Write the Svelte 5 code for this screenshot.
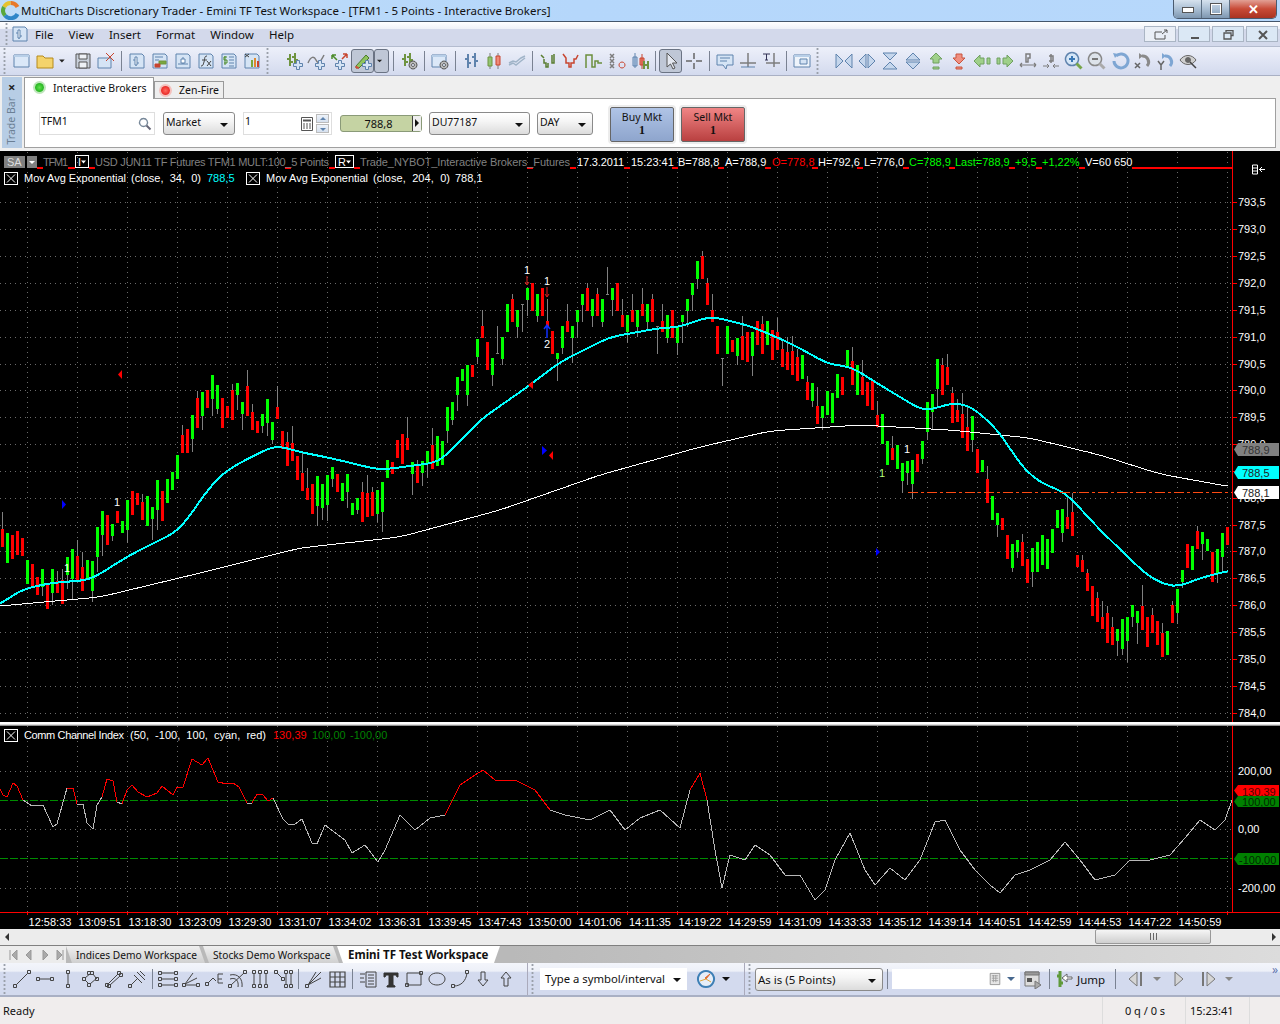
<script>
  const sq = (x, y) => `M${x - 1.5} ${y - 1.5}h3v3h-3z`;
  const B = '#5f83ad', L = '#d5e4f5', G = '#6f9440', D = '#444', GR = '#7d7d7d', R = '#c8452f';
  const doc = ['M3 3h12l2 2v12H3z', L, B];
  const plus = (x, y, c = B, f = L) => [`M${x - 1.5} ${y - 4.5}h3v3h3v3h-3v3h-3v-3h-3v-3h3z`, f, c];
  const gear = (x, y) => [`M${x} ${y - 4}a4 4 0 1 0 .01 0zM${x} ${y - 1.5}a1.5 1.5 0 1 1-.01 0z`, '#bbb', '#555'];
  const icons = {
    win: [['M2 4h15v12H2z', '#dbe8f8', B], ['M2 4h15v2H2z', '#b8cfe8', 'none']],
    folder: [['M2 5h6l2 2h8v10H2z', '#f4d36b', '#b58a1c']],
    dd: [['M3 8h8l-4 4z', '#222', 'none']],
    save: [['M3 3h14v14H3z', '#c9d0da', '#555'], ['M6 3h8v5H6zM6 11h8v6H6z', '#eef1f5', '#555']],
    delwin: [['M2 7h13v10H2z', L, B], ['M10 2l8 8M18 2l-8 8', 'none', '#c8452f']],
    docBar: [doc, ['M9 6v9M6 9h3M9 12h3', 'none', B], ['M8 6h2v8H8z', '#fff', B]],
    docGreen: [doc, ['M5 6h8M5 9h4', 'none', B], ['M9 10h7v3H9z', '#7aa83c', G], ['M5 13h5v3H5z', '#c8452f', R]],
    docScale: [doc, ['M5 13h10M10 6v7', 'none', B], ['M8 8h4v4H8z', '#fff', B]],
    docFx: [doc, ['M11 5c-3 0-2 3-3 6s-1 4-3 4M6 9h5M11 10l4 5M15 10l-4 5', 'none', '#444']],
    docDollar: [doc, ['M10 6h5M10 9h5M10 12h5M10 15h5', 'none', B], ['M8 6H5v3h3v3H5', 'none', '#4c8c2b'], ['M6 5v9', 'none', '#4c8c2b']],
    docColor: [doc, ['M9 9h2v7H9z', '#7aa83c', 'none'], ['M12 7h2v9h-2z', '#e08a2e', 'none'], ['M15 10h2v6h-2z', '#c8452f', 'none'], ['M3 3l4 3M7 3l-4 3', 'none', '#444']],
    barsPlus: [['M6 3v12M3 8h3M6 11h3M11 2v10M8 6h3M11 9h3', 'none', G, 2], plus(14, 14)],
    curvePlus: [['M1 12c3-7 6-7 8-3s4 3 8-5', 'none', GR, 1.5], plus(13, 14)],
    arrowsPlus: [['M2 4l5 5M2 4h4M2 4v4', 'none', '#4c8c2b', 1.5], ['M17 3l-5 5M17 3h-4M17 3v4', 'none', R, 1.5], plus(10, 14)],
    pencilPlus: [['M3 15L13 4l3 3L6 17H3z', '#8fc45e', '#4c7a2b'], ['M3 15l3 2H3z', '#d24c3a', '#d24c3a'], plus(14, 14)],
    barsGear: [['M6 3v12M3 8h3M6 11h3M11 2v10M8 6h3M11 9h3', 'none', G, 2], gear(14, 14)],
    winGear: [['M2 4h14v12H2z', '#dbe8f8', B], ['M2 4h14v2H2z', '#b8cfe8', 'none'], gear(14, 14)],
    ohlc: [['M7 3v14M4 8h3M7 12h3M14 2v14M11 6h3M14 10h3', 'none', '#5f83ad', 2]],
    candle: [['M6 2v16M14 2v16', 'none', GR], ['M4 6h4v9H4z', '#93c572', G], ['M12 5h4v9h-4z', '#ef8a78', R]],
    lineIcon: [['M2 14l4-2 3 2 5-4 4-3M2 12l4-2 3 1 5-4 4-2', 'none', '#a0b4c8', 1.5]],
    kagi: [['M3 4l3 3M6 8v4h2v4h2v-4M14 4v8h2V3', 'none', '#5a7d30', 1.5]],
    vshape: [['M2 3l3 4v5h3v4h2v-4h3V8h2l2-4', 'none', R, 1.5]],
    step: [['M2 17V4h6v12h3v-6h3v2h4', 'none', '#6b8e3d', 1.5]],
    pf: [['M3 3l4 4M7 3l-4 4M3 8l4 4M7 8l-4 4M3 13l4 4M7 13l-4 4', 'none', GR, 1.5], ['M15 11a3 3 0 1 0 .01 0z', 'none', R]],
    renko: [['M5 2v15M3 6h4v9H3z', '#bcd0ea', B], ['M12 3v15M10 7h4v7h-4z', '#ef8a78', R], ['M14 10v8M18 10v8M14 14h4', 'none', G, 2]],
    arrow: [['M6 2v14l3.5-3 2.5 5 2-1-2.5-5H16z', '#e4e8f0', '#555']],
    cross: [['M10 2v6M10 12v6M2 10h6M12 10h6', 'none', '#666', 1.5]],
    note: [['M2 4h16v10h-6l-1 4-3-4H2z', L, B], ['M5 7h10M5 10h7', 'none', B]],
    tradeLine: [['M10 2v14M2 12h16', 'none', GR, 1.5], ['M3 16h14', 'none', B]],
    tradeText: [['M13 2v14M5 12h14', 'none', GR, 1.5], ['M2 3h7M5.5 3v6M4 9h3', 'none', '#335']],
    panel: [['M2 4h16v12H2z', '#eef4fb', B], ['M8 8h7v5H8z', L, B], ['M2 4h16v2H2z', '#b8cfe8', 'none']],
    shrinkH: [['M2 3v14l7-7zM18 3v14l-7-7z', '#c5d6ec', B]],
    expandH: [['M9 3v14L2 10zM11 3v14l7-7z', '#c5d6ec', B]],
    shrinkV: [['M3 2h14l-7 7zM3 18h14l-7-7z', '#c5d6ec', B]],
    expandV: [['M3 9h14l-7-7zM3 11h14l-7 7z', '#c5d6ec', B]],
    upG: [['M10 2l6 6h-3v4H7V8H4z', '#9fd08a', '#6fa060'], ['M7 16h6v2H7z', '#9fd08a', '#6fa060']],
    downR: [['M10 13l6-6h-3V3H7v4H4z', '#f08f80', '#c8553f'], ['M7 16h6v2H7z', '#f08f80', '#c8553f']],
    leftG: [['M2 10l6-6v3h4v6H8v3z', '#9fd08a', '#6fa060'], ['M15 7h3v6h-3z', '#9fd08a', '#6fa060']],
    rightG: [['M18 10l-6-6v3H8v6h4v3z', '#9fd08a', '#6fa060'], ['M2 7h3v6H2z', '#9fd08a', '#6fa060']],
    zoomBar: [['M8 3h4v4h-2v4h-2z', 'none', GR, 1.5], ['M2 14h16M2 14l2-2M2 14l2 2M18 14l-2-2M18 14l-2 2', 'none', GR, 1.2]],
    zoomBar2: [['M10 3v9M8 5h4v5H8', 'none', GR, 1.5], ['M2 15h6M8 15l-2-2M8 15l-2 2M18 15h-6M12 15l2-2M12 15l2 2', 'none', GR]],
    zoomIn: [['M8 1.5a6.5 6.5 0 1 0 .01 0z', '#d5e6f7', B, 1.5], ['M8 5v6M5 8h6', 'none', '#3a78b5', 2], ['M12.5 12.5l5 5', 'none', '#77a64a', 3]],
    zoomOut: [['M8 1.5a6.5 6.5 0 1 0 .01 0z', '#dde3ea', '#888', 1.5], ['M5 8h6', 'none', '#777', 2], ['M12.5 12.5l5 5', 'none', '#aaa', 3]],
    undoB: [['M6 5a7 7 0 1 1-2 5', 'none', '#7ea6d3', 3], ['M3 2l5 1-3 4z', '#7ea6d3', 'none']],
    undoX: [['M9 5a6 6 0 0 1 5 10', 'none', '#8a8a8a', 3], ['M6 2l4 3-4 3z', '#8a8a8a', 'none'], ['M2 12l5 5M7 12l-5 5', 'none', '#666', 1.5]],
    undoY: [['M9 5a6 6 0 0 1 5 10', 'none', '#7ea6d3', 3], ['M6 2l4 3-4 3z', '#7ea6d3', 'none'], ['M2 10l3 4 3-4M5 14v5', 'none', '#666', 1.5]],
    eye: [['M1 9c4-6 12-6 16 0-4 6-12 6-16 0z', '#cfcfcf', '#666'], ['M9 6a3 3 0 1 0 .01 0z', '#666', 'none'], ['M11 11l6 6', 'none', '#444', 1.5]],
    tLine: [[sq(3, 17) + sq(17, 3) + 'M4.5 15.5L15.5 4.5', 'none', D]],
    hLine: [[sq(3, 10) + sq(17, 10) + 'M4.5 10h11', 'none', D]],
    vLine: [[sq(10, 3) + sq(10, 17) + 'M10 4.5v11', 'none', D]],
    chan3: [[sq(3, 10) + sq(8, 16) + sq(11, 4) + sq(16, 10) + sq(8, 4) + 'M4 9l6-5M4 11l4 4M9 15l7-6M12 5l3 4', 'none', D]],
    chan2: [[sq(3, 16) + sq(15, 4) + sq(5, 17) + sq(17, 6) + 'M4 15L14 5M6 16L16 7', 'none', D]],
    fork: [[sq(3, 17) + 'M4 16l6-6M7 6l8 8M10 3l8 8M13 2l5 5', 'none', D]],
    fibH: [[sq(2, 4) + sq(18, 4) + sq(2, 10) + sq(18, 10) + sq(2, 16) + sq(18, 16) + 'M4 4h12M4 10h12M4 16h12', 'none', D]],
    fibFan: [[sq(3, 16) + sq(17, 16) + 'M4 16h12M4 15l12-6M4 15l8-11', 'none', D]],
    fibExt: [[sq(3, 15) + 'M4 14l5-5 3 3M14 5h5M14 5v9h5M14 10h4', 'none', D]],
    fibArc: [[sq(3, 17) + sq(18, 3) + 'M4 16L17 4M3 10c6-2 9 2 8 8M3 6c8-2 13 4 12 12', 'none', D]],
    timeZ: [[sq(4, 3) + sq(4, 17) + sq(10, 3) + sq(10, 17) + sq(16, 3) + sq(16, 17) + 'M4 4.5v11M10 4.5v11M16 4.5v11', 'none', D]],
    timeC: [[sq(3, 3) + sq(10, 10) + sq(13, 3) + sq(13, 17) + sq(18, 3) + sq(18, 17) + 'M4 4l5 5M13 4.5v11M18 4.5v11', 'none', D]],
    gann: [[sq(3, 17) + 'M4 16L17 3M4 16L12 3M4 16L17 9', 'none', D]],
    grid: [['M3 3h15v15H3zM3 8h15M3 13h15M8 3v15M13 3v15', 'none', D, 1.2]],
    calc: [['M2 5h5M2 9h4M2 13h5', 'none', D], ['M8 3h10v15H8z', 'none', D], ['M10 6h6M10 9h6M10 12h6M10 15h6', 'none', D]],
    txt: [['M3 4h14v4h-1l-1-2h-3v10l2 1v1H6v-1l2-1V6H5L4 8H3z', '#333', '#333']],
    rectT: [[sq(3, 16) + sq(17, 4) + 'M3 4h14v12H3z', 'none', D]],
    ell: [['M10 4c5 0 8 3 8 6s-3 6-8 6-8-3-8-6 3-6 8-6z', 'none', D]],
    arcT: [[sq(3, 17) + sq(17, 3) + 'M4 17c7 0 12-5 13-13', 'none', D]],
    downA: [['M8 3h4v8h3l-5 6-5-6h3z', 'none', D]],
    upA: [['M8 17h4V9h3l-5-6-5 6h3z', 'none', D]],
    globe: [['M10 2a8 8 0 1 0 .01 0z', '#e6eef8', '#3d7fb5', 2], ['M10 10l4-5-5 4z', '#e06a2e', '#e06a2e'], ['M4 12l6-2 5 3', 'none', '#e0a53c']],
    calBtn: [['M4 3h12v14H4z', '#e6e6e6', '#888'], ['M6 6h8M6 9h8M6 12h8M8 5v9M11 5v9', 'none', '#999']],
    cal2: [['M2 3h14v14H2z', '#ddd', '#777'], ['M2 3h14v3H2z', '#999', '#777'], ['M4 9h5v4H4z', '#555', 'none'], ['M12 12l6 4-6 4z', '#aaa', '#777']],
    jump: [['M6 2v16M3 7h3M6 14h3', 'none', '#5f9a3a', 3], ['M18 8h-5V5l-5 4 5 4v-3h5z', '#fff', '#666']],
    prevBar: [['M11 3v14l-8-7z', '#d5d5d5', '#777'], ['M15 3v14', 'none', '#777', 2]],
    play: [['M6 3v14l8-7z', '#d5d5d5', '#777']],
    nextBar: [['M5 3v14', 'none', '#777', 2], ['M9 3v14l8-7z', '#d5d5d5', '#777']]
  };
  const topRow = ['win', 'folder', '~dd', 'save', 'delwin', '|', 'docBar', 'docGreen', 'docScale', 'docFx', 'docDollar', 'docColor', '>', 'barsPlus', 'curvePlus', 'arrowsPlus', '*pencilPlus', '*~dd', '|', 'barsGear', '|', 'winGear', '|', 'ohlc', 'candle', 'lineIcon', '|', 'kagi', 'vshape', 'step', 'pf', 'renko', '|', '*arrow', 'cross', '|', 'note', 'tradeLine', 'tradeText', '|', 'panel', '>', 'shrinkH', 'expandH', 'shrinkV', 'expandV', 'upG', 'downR', 'leftG', 'rightG', 'zoomBar', 'zoomBar2', 'zoomIn', 'zoomOut', 'undoB', 'undoX', 'undoY', 'eye'];
  const bottomRow = ['tLine', 'hLine', 'vLine', 'chan3', 'chan2', 'fork', '|', 'fibH', 'fibFan', 'fibExt', 'fibArc', 'timeZ', 'timeC', '|', 'gann', 'grid', '|', 'calc', 'txt', 'rectT', 'ell', 'arcT', 'downA', 'upA'];

  const interp = (pts, x) => {
    for (let i = 1; i < pts.length; i++) {
      if (x <= pts[i][0]) {
        const [a, b] = pts[i - 1], [c, d] = pts[i];
        return b + ((x - a) / (c - a)) * (d - b);
      }
    }
    return pts[pts.length - 1][1];
  };
  const pricePath = [[0, 550], [15, 545], [30, 570], [50, 590], [60, 595], [70, 560], [90, 575], [105, 520], [120, 530], [135, 510], [150, 510], [170, 490], [190, 420], [210, 395], [225, 410], [240, 395], [255, 420], [275, 420], [295, 460], [315, 500], [335, 470], [350, 500], [380, 500], [400, 440], [420, 470], [440, 450], [455, 400], [470, 365], [480, 350], [725, 340], [745, 340], [770, 340], [800, 370], [820, 420], [840, 390], [850, 360], [870, 400], [890, 450], [910, 475], [925, 430], [940, 365], [955, 410], [975, 440], [985, 490], [1005, 540], [1030, 570], [1050, 540], [1065, 510], [1085, 580], [1100, 630], [1115, 640], [1130, 620], [1150, 630], [1165, 640], [1180, 590], [1195, 540], [1215, 560], [1230, 530]];
  const traced = [[482, 258, 293, 0, 210, 295], [487, 306, 390, 0, 306, 390], [492, 354, 405, 1, 354, 438], [497, 340, 341, -1, 258, 340], [502, 291, 357, 1, 291, 375], [507, 192, 276, 1, 192, 276], [512, 177, 246, 0, 162, 246], [517, 210, 262, 1, 210, 293], [522, 193, 194, -1, 193, 276], [527, 144, 180, 1, 144, 228], [532, 129, 213, 0, 129, 213], [537, 162, 228, 1, 162, 246], [542, 144, 228, 0, 144, 228], [547, 243, 261, 0, 177, 261], [552, 273, 342, 0, 273, 342], [557, 339, 357, 1, 339, 422], [562, 258, 324, 1, 258, 342], [567, 243, 276, 0, 192, 276], [572, 258, 294, 1, 258, 370], [577, 210, 246, 1, 210, 295], [582, 162, 195, 1, 162, 246], [587, 144, 213, 0, 129, 213], [592, 177, 228, 1, 177, 260], [597, 162, 228, 0, 144, 228], [602, 177, 246, 1, 177, 262], [607, 162, 163, -1, 81, 162], [612, 144, 180, 1, 144, 228], [617, 129, 213, 0, 129, 213], [622, 225, 261, 0, 177, 261], [627, 225, 276, 1, 225, 310], [632, 210, 246, 0, 162, 246], [637, 210, 262, 1, 210, 290], [642, 192, 228, 0, 144, 228], [647, 192, 246, 1, 192, 270], [652, 177, 246, 0, 162, 246], [657, 258, 259, -1, 258, 342], [662, 243, 276, 0, 192, 276], [667, 225, 294, 1, 225, 310], [672, 210, 294, 0, 210, 294], [677, 258, 310, 1, 258, 345], [682, 225, 246, 1, 225, 310], [687, 177, 213, 1, 177, 260], [692, 129, 165, 1, 129, 213], [697, 63, 117, 1, 63, 147], [702, 48, 117, 0, 33, 117], [707, 129, 195, 0, 113, 195], [712, 210, 246, 0, 162, 246], [717, 258, 342, 0, 258, 342], [722, 354, 355, -1, 354, 438], [727, 258, 342, 1, 258, 342]];
  let seed = 7;
  const rnd = () => ((seed = (seed * 16807) % 2147483647) / 2147483647);
  const candles = [];
  for (let i = 0; i < 246; i++) {
    const x = 2 + 5 * i;
    const t = traced.find((c) => c[0] === x);
    if (t) {
      candles.push({ x, top: 240 + t[1] / 3, bot: 240 + t[2] / 3, kind: t[3], wt: 240 + t[4] / 3, wb: 240 + t[5] / 3 });
      continue;
    }
    const c = interp(pricePath, x) + (rnd() - 0.5) * 22;
    const slope = interp(pricePath, x + 5) - interp(pricePath, x - 5);
    const up = rnd() < (slope < 0 ? 0.72 : slope > 0 ? 0.35 : 0.5);
    const h = 12 + Math.floor(rnd() * 4) * 6;
    const top = Math.round(c - h / 2), bot = top + h;
    const w = rnd() < 0.65 ? 4 + rnd() * 18 : 0;
    candles.push({ x, top, bot, kind: up ? 1 : 0, wt: up ? top : top - w, wb: up ? bot + w : bot });
  }
  const pts = (a) => a.map((p) => p.join(',')).join(' ');
  const smooth = (p) => {
    const o = [];
    for (let x = p[0][0]; x <= p[p.length - 1][0]; x += 5) {
      const avg = (interp(p, x - 10) + interp(p, x) * 2 + interp(p, x + 10)) / 4;
      o.push([x, +avg.toFixed(1)]);
    }
    return o;
  };
  const ema34 = smooth([[-12, 607], [0, 605], [20, 590], [50, 583], [90, 580], [130, 555], [150, 545], [180, 530], [195, 508], [215, 480], [235, 465], [250, 458], [275, 445], [300, 452], [330, 458], [380, 470], [440, 462], [480, 420], [530, 385], [560, 362], [610, 337], [660, 328], [680, 327], [710, 316], [750, 326], [790, 343], [830, 365], [850, 366], [880, 385], [925, 412], [950, 403], [970, 405], [1000, 432], [1020, 465], [1040, 483], [1065, 492], [1100, 530], [1150, 578], [1175, 588], [1200, 578], [1232, 570]]);
  const ema204 = smooth([[-12, 607], [0, 606], [100, 597], [200, 573], [300, 548], [400, 537], [500, 510], [600, 475], [700, 447], [770, 431], [860, 425], [950, 430], [1030, 438], [1100, 455], [1160, 474], [1232, 487]]);
  const cci = [[0, 789], [3, 795], [7, 797], [13, 783], [17, 786], [23, 800], [32, 806], [43, 805], [53, 827], [57, 824], [67, 788], [73, 788], [77, 804], [83, 804], [87, 823], [93, 829], [97, 805], [102, 797], [107, 779], [113, 781], [117, 802], [122, 804], [127, 790], [132, 785], [138, 792], [147, 797], [157, 793], [162, 786], [173, 795], [177, 787], [183, 787], [192, 759], [202, 765], [208, 758], [218, 782], [227, 784], [233, 783], [239, 787], [247, 803], [252, 803], [257, 794], [263, 795], [268, 801], [273, 798], [283, 819], [288, 824], [295, 824], [302, 819], [312, 843], [317, 844], [325, 825], [345, 840], [352, 853], [365, 845], [378, 862], [385, 850], [400, 815], [415, 830], [430, 818], [445, 815], [460, 785], [475, 775], [483, 770], [495, 780], [515, 780], [535, 790], [550, 810], [565, 815], [590, 820], [610, 810], [625, 830], [640, 818], [660, 810], [680, 828], [690, 790], [700, 773], [707, 800], [715, 850], [722, 888], [730, 855], [745, 860], [755, 845], [770, 855], [785, 875], [800, 875], [815, 900], [825, 890], [835, 860], [850, 833], [865, 870], [875, 885], [890, 868], [905, 880], [920, 860], [935, 822], [945, 820], [960, 850], [975, 870], [990, 885], [1000, 893], [1015, 875], [1030, 870], [1050, 860], [1065, 842], [1080, 860], [1095, 880], [1115, 875], [1130, 860], [1150, 860], [1170, 855], [1185, 838], [1200, 820], [1215, 830], [1225, 820], [1232, 800]];
  const cciSegs = cci.slice(1).map((p, i) => {
    const a = cci[i];
    return { x1: a[0], y1: a[1], x2: p[0], y2: p[1], c: (a[1] + p[1]) / 2 < 801 ? '#ff0000' : '#b8b8b8' };
  });
  const vGrid = Array.from({ length: 25 }, (_, i) => 27 + 50 * i);
  const priceLabels = [];
  const priceVals = ['793,5', '793,0', '792,5', '792,0', '791,5', '791,0', '790,5', '790,0', '789,5', '789,0', '', '788,0', '787,5', '787,0', '786,5', '786,0', '785,5', '785,0', '784,5', '784,0'];
  const priceYs = [202, 229, 256, 283, 310, 337, 364, 390, 417, 444, 471, 498, 525, 551, 578, 605, 632, 659, 686, 713];
  priceVals.forEach((t, i) => priceLabels.push({ t, y: priceYs[i] }));
  const times = ['12:58:33', '13:09:51', '13:18:30', '13:23:09', '13:29:30', '13:31:07', '13:34:02', '13:36:31', '13:39:45', '13:47:43', '13:50:00', '14:01:06', '14:11:35', '14:19:22', '14:29:59', '14:31:09', '14:33:33', '14:35:12', '14:39:14', '14:40:51', '14:42:59', '14:44:53', '14:47:22', '14:50:59'];
  const under = [[37, 43], [68, 75], [89, 95], [285, 291], [329, 335], [354, 360], [527, 533], [570, 576], [624, 630], [672, 678], [718, 724], [765, 771], [812, 818], [857, 863], [903, 909], [949, 955], [1009, 1015], [1036, 1042], [1079, 1085], [1132, 1232]];
  const marks = [
    { x: 527, y: 274, t: '1', c: '#fff' }, { x: 547, y: 285, t: '1', c: '#fff' }, { x: 547, y: 348, t: '2', c: '#fff' },
    { x: 117, y: 506, t: '1', c: '#fff' }, { x: 67, y: 572, t: '1', c: '#fff' }, { x: 907, y: 453, t: '1', c: '#fff' }, { x: 882, y: 477, t: '1', c: '#b6ff7a' }
  ];
  const tris = ['122,370 118,374.5 122,379', '62,500 66,504.5 62,509', '542,446 547,450.5 542,455', '553,451 549,455.5 553,460', '876,548 880,552 876,556', '533,381 528,385 533,389'];
  const triCol = ['#f00', '#00f', '#00f', '#f00', '#00f', '#f00'];
</script>

{#snippet ic(name, size = 20)}
  <svg class="ic" width={size} height={size} viewBox="0 0 20 20" aria-hidden="true">
    {#each icons[name] as p}
      <path d={p[0]} fill={p[1]} stroke={p[2]} stroke-width={p[3] ?? 1} />
    {/each}
  </svg>
{/snippet}

{#snippet cell(item)}
  {#if item === '|'}
    <span class="sep"></span>
  {:else if item === '>'}
    <span class="grip"></span>
  {:else}
    {@const active = item.startsWith('*')}
    {@const clean = item.replace('*', '')}
    {#if clean.startsWith('~')}
      <span class="cell narrow" class:active>{@render ic('dd', 14)}</span>
    {:else}
      <span class="cell" class:active>{@render ic(clean)}</span>
    {/if}
  {/if}
{/snippet}

<div class="app">
  <header class="title">
    <svg class="logo" width="19" height="19" viewBox="0 0 19 19" aria-hidden="true">
      <g fill="none" stroke-width="4">
        <path d="M16.500 6A7.500 7.500 0 0 0 9.500 2" stroke="#e8792b" />
        <path d="M9.500 2A7.500 7.500 0 0 0 3 6" stroke="#e7c22e" />
        <path d="M3 6A7.500 7.500 0 0 0 4 14.500" stroke="#5aa83c" />
        <path d="M4 14.500A7.500 7.500 0 0 0 16.500 13" stroke="#2f86c8" />
      </g>
    </svg>
    <span class="title-text">MultiCharts Discretionary Trader - Emini TF Test Workspace - [TFM1 - 5 Points - Interactive Brokers]</span>
    <div class="winbtns">
      <span class="wb"><i class="wmin"></i></span>
      <span class="wb"><i class="wmax"></i></span>
      <span class="wb close">✕</span>
    </div>
  </header>

  <nav class="menubar">
    <span class="grip small"></span>
    <span class="mico">{@render ic('docBar')}</span>
    {#each ['File', 'View', 'Insert', 'Format', 'Window', 'Help'] as m}
      <span class="menu">{m}</span>
    {/each}
    <div class="mdi">
      <span class="mb first"><svg width="14" height="11" viewBox="0 0 14 11"><path d="M1 3h7M1 3v7h10V6M8 5l5-4M10 1h3v3" fill="none" stroke="#555" /></svg></span>
      <span class="mb"><i class="d-min"></i></span>
      <span class="mb"><svg width="11" height="10" viewBox="0 0 11 10"><path d="M3 2V0.500h7v5H8M1 3h7v6H1z" fill="none" stroke="#555" stroke-width="1.300" /></svg></span>
      <span class="mb"><svg width="10" height="10" viewBox="0 0 10 10"><path d="M1 1l8 8M9 1l-8 8" stroke="#555" stroke-width="2" /></svg></span>
    </div>
  </nav>

  <div class="toolbar">
    <span class="grip"></span>
    {#each topRow as it}{@render cell(it)}{/each}
  </div>

  <section class="trade">
    <aside class="rail"><span class="rail-x">×</span><span class="rail-t">Trade Bar</span></aside>
    <div class="trade-main">
      <div class="ttabs">
        <span class="ttab on"><i class="led green"></i>Interactive Brokers</span>
        <span class="ttab"><i class="led red"></i>Zen-Fire</span>
      </div>
      <div class="tpanel">
        <div class="field w-sym"><span>TFM1</span>
          <svg width="14" height="14" viewBox="0 0 14 14"><path d="M5.500 1.500a4 4 0 1 0 .01 0z" fill="none" stroke="#789" stroke-width="1.300" /><path d="M8.500 8.500l4 4" stroke="#667" stroke-width="2" /></svg>
        </div>
        <div class="sel w-mkt">Market<i class="caret"></i></div>
        <div class="field w-qty"><span>1</span>
          <svg class="calc" width="14" height="14" viewBox="0 0 14 14"><path d="M1.500.500h11v13h-11z" fill="#fff" stroke="#555" /><path d="M3 2.500h8v2H3z" fill="#555" /><path d="M3 7h2M6 7h2M9 7h2M3 9h2M6 9h2M9 9h2M3 11h2M6 11h2M9 11h2" stroke="#555" /></svg>
          <span class="spin"><i class="up"></i><i class="down"></i></span>
        </div>
        <div class="price"><span>788,8</span><em><i></i></em></div>
        <div class="sel w-acc">DU77187<i class="caret"></i></div>
        <div class="sel w-day">DAY<i class="caret"></i></div>
        <button class="ord buy">Buy Mkt<b>1</b></button>
        <button class="ord sell">Sell Mkt<b>1</b></button>
      </div>
    </div>
  </section>

  <svg class="pane main" width="1280" height="571" viewBox="0 151 1280 571">
    <rect x="0" y="151" width="1280" height="571" fill="#000" />
    <g stroke="#6a6a6a" stroke-dasharray="1 4" shape-rendering="crispEdges">
      {#each vGrid as x}<line x1={x + 0.5} x2={x + 0.5} y1="152" y2="722" />{/each}
      {#each priceYs as y}<line x1="0" x2="1232" y1={y + 0.5} y2={y + 0.5} />{/each}
    </g>
    <g shape-rendering="crispEdges">
      {#each candles as c}
        <line x1={c.x + 0.5} x2={c.x + 0.5} y1={c.wt} y2={c.wb} stroke="#808080" />
        {#if c.kind === -1}
          <line x1={c.x - 1} x2={c.x + 2} y1={c.top + 0.5} y2={c.top + 0.5} stroke="#808080" />
        {:else}
          <rect x={c.x - 1} y={c.top} width="3" height={c.bot - c.top} fill={c.kind ? '#00ff00' : '#ff0000'} />
        {/if}
      {/each}
    </g>
    <polyline points={pts(ema204)} fill="none" stroke="#fff" stroke-width="1" shape-rendering="crispEdges" />
    <polyline points={pts(ema34)} fill="none" stroke="#00ffff" stroke-width="2" shape-rendering="crispEdges" />
    <line x1="908" x2="1232" y1="492.500" y2="492.500" stroke="#ff4a12" stroke-width="1.500" stroke-dasharray="10 3 3 3" shape-rendering="crispEdges" />
    {#each tris as t, i}<polygon points={t} fill={triCol[i]} />{/each}
    {#each marks as m}<text class="mk" x={m.x} y={m.y} fill={m.c}>{m.t}</text>{/each}
    <path d="M527 276v8M525 282l2 3 2-3M547 287v9M545 294l2 3 2-3" stroke="#e02020" fill="none" />
    <path d="M547 338v-12M544 329l3-4 3 4" stroke="#1030ff" fill="none" stroke-width="1.500" />

    <g shape-rendering="crispEdges" fill="#ff0000">
      {#each under as u}<rect x={u[0]} y="167" width={u[1] - u[0]} height="2" />{/each}
    </g>
    <rect x="4" y="156" width="21" height="12" fill="#808080" />
    <text class="lg" x="7" y="166" fill="#ddd">SA</text>
    <rect x="27" y="156" width="10" height="12" fill="#808080" />
    <path d="M29 161h6l-3 3z" fill="#fff" />
    <text class="lg" x="43" y="166" fill="#808080" textLength="25">TFM1</text>
    <rect x="75.500" y="155.500" width="13" height="12" fill="none" stroke="#fff" />
    <text class="lg" x="78" y="166" fill="#fff">I</text><path d="M81 160.500h5l-2.500 3z" fill="#fff" />
    <text class="lg" x="95" y="166" fill="#808080" textLength="234">USD JUN11 TF Futures TFM1 MULT:100_5 Points</text>
    <rect x="335.500" y="155.500" width="18" height="12" fill="none" stroke="#fff" />
    <text class="lg" x="338" y="166" fill="#fff">R</text><path d="M346 160.500h5l-2.500 3z" fill="#fff" />
    <text class="lg" x="360" y="166" fill="#808080" textLength="210">Trade_NYBOT_Interactive Brokers_Futures</text>
    <text class="lg" x="577" y="166" fill="#fff" textLength="47">17.3.2011</text>
    <text class="lg" x="631" y="166" fill="#fff">15:23:41</text>
    <text class="lg" x="678" y="166" fill="#fff">B=788,8</text>
    <text class="lg" x="725" y="166" fill="#fff">A=788,9</text>
    <text class="lg" x="772" y="166" fill="#ff0000">O=778,8</text>
    <text class="lg" x="818" y="166" fill="#fff">H=792,6</text>
    <text class="lg" x="864" y="166" fill="#fff">L=776,0</text>
    <text class="lg" x="909" y="166" fill="#00ff00">C=788,9</text>
    <text class="lg" x="955" y="166" fill="#00ff00">Last=788,9</text>
    <text class="lg" x="1015" y="166" fill="#00ff00">+9,5</text>
    <text class="lg" x="1042" y="166" fill="#00ff00">+1,22%</text>
    <text class="lg" x="1085" y="166" fill="#fff">V=60 650</text>

    <rect x="4.500" y="172.500" width="13" height="12" fill="#000" stroke="#fff" /><path d="M7 174.500l8 8M15 174.500l-8 8" stroke="#fff" />
    <text class="lg" x="24" y="182" fill="#fff" textLength="102">Mov Avg Exponential</text>
    <text class="lg pre" x="131" y="182" fill="#fff" textLength="70">(close,  34,  0)</text>
    <text class="lg" x="207" y="182" fill="#00ffff">788,5</text>
    <rect x="246.500" y="172.500" width="13" height="12" fill="#000" stroke="#fff" /><path d="M249 174.500l8 8M257 174.500l-8 8" stroke="#fff" />
    <text class="lg" x="266" y="182" fill="#fff" textLength="102">Mov Avg Exponential</text>
    <text class="lg pre" x="373" y="182" fill="#fff" textLength="77">(close,  204,  0)</text>
    <text class="lg" x="455" y="182" fill="#fff">788,1</text>

    <path d="M1252.500 165h5v9h-5zM1253 168h4M1253 171h4" fill="#000" stroke="#fff" />
    <path d="M1259 169.500h6M1262 167l-2.500 2.500 2.500 2.500" fill="none" stroke="#fff" />

    <line x1="1232.500" x2="1232.500" y1="151" y2="722" stroke="#ff0000" shape-rendering="crispEdges" />
    {#each priceYs as y}<line x1="1233" x2="1237" y1={y + 0.5} y2={y + 0.5} stroke="#ff0000" shape-rendering="crispEdges" />{/each}
    {#each priceLabels as l}{#if l.t}<text class="ax" x="1238" y={l.y + 4}>{l.t}</text>{/if}{/each}
    <polygon points="1234,449.500 1238,443 1279,443 1279,456 1238,456" fill="#808080" />
    <text class="tag" x="1242" y="454" fill="#333">788,9</text>
    <polygon points="1234,472.500 1238,466 1279,466 1279,479 1238,479" fill="#00ffff" />
    <text class="tag" x="1242" y="477" fill="#222">788,5</text>
    <polygon points="1234,492.500 1238,486 1279,486 1279,499 1238,499" fill="#fff" />
    <text class="tag" x="1242" y="497" fill="#222">788,1</text>
  </svg>

  <div class="splitter"></div>

  <svg class="pane" width="1280" height="186" viewBox="0 726 1280 186">
    <rect x="0" y="726" width="1280" height="186" fill="#000" />
    <g stroke="#6a6a6a" stroke-dasharray="1 4" shape-rendering="crispEdges">
      {#each vGrid as x}<line x1={x + 0.5} x2={x + 0.5} y1="726" y2="912" />{/each}
      {#each [771, 829, 888] as y}<line x1="0" x2="1232" y1={y + 0.5} y2={y + 0.5} />{/each}
    </g>
    <g stroke="#008c00" stroke-width="1.500" stroke-dasharray="8 2" shape-rendering="crispEdges">
      <line x1="0" x2="1232" y1="800.500" y2="800.500" />
      <line x1="0" x2="1232" y1="858.500" y2="858.500" />
    </g>
    {#each cciSegs as s}<line x1={s.x1} y1={s.y1} x2={s.x2} y2={s.y2} stroke={s.c} shape-rendering="crispEdges" />{/each}
    <rect x="4.500" y="729.500" width="13" height="12" fill="#000" stroke="#fff" /><path d="M7 731.500l8 8M15 731.500l-8 8" stroke="#fff" />
    <text class="lg" x="24" y="739" fill="#fff" textLength="100">Comm Channel Index</text>
    <text class="lg pre" x="130" y="739" fill="#fff" textLength="136">(50,  -100,  100,  cyan,  red)</text>
    <text class="lg" x="273" y="739" fill="#ff0000">130,39</text>
    <text class="lg" x="312" y="739" fill="#008000">100,00</text>
    <text class="lg" x="350" y="739" fill="#008000">-100,00</text>
    <line x1="1232.500" x2="1232.500" y1="726" y2="912" stroke="#ff0000" shape-rendering="crispEdges" />
    <text class="ax" x="1238" y="775">200,00</text>
    <text class="ax" x="1238" y="833">0,00</text>
    <text class="ax" x="1238" y="892">-200,00</text>
    <polygon points="1234,790.500 1238,785 1279,785 1279,796 1238,796" fill="#ff0000" />
    <text class="tag" x="1242" y="796" fill="#500">130,39</text>
    <polygon points="1234,801.500 1238,796 1279,796 1279,807 1238,807" fill="#008000" />
    <text class="tag" x="1242" y="805.500" fill="#002800">100,00</text>
    <polygon points="1234,859 1238,853 1279,853 1279,865 1238,865" fill="#008000" />
    <text class="tag" x="1239" y="863.500" fill="#002800">-100,00</text>
  </svg>

  <svg class="pane" width="1280" height="17" viewBox="0 912 1280 17">
    <rect x="0" y="912" width="1280" height="17" fill="#000" />
    <line x1="0" x2="1280" y1="912.500" y2="912.500" stroke="#ff0000" shape-rendering="crispEdges" />
    {#each vGrid as x}<line x1={x + 0.5} x2={x + 0.5} y1="912" y2="915" stroke="#ff0000" shape-rendering="crispEdges" />{/each}
    {#each times as t, i}<text class="ax" x={50 + 50 * i} y="926" text-anchor="middle">{t}</text>{/each}
  </svg>

  <div class="hscroll">
    <i class="arr l"></i>
    <div class="thumb"><span></span></div>
    <i class="arr r"></i>
  </div>

  <div class="wtabs">
    <div class="wnav">
      <svg width="60" height="14" viewBox="0 0 60 14"><path d="M5 2v10M12 2l-5 5 5 5zM26 2l-5 5 5 5zM38 2l5 5-5 5zM52 2l5 5-5 5zM58 2v10" fill="#aaa" stroke="#999" /></svg>
    </div>
    <span class="wtab t1">Indices Demo Workspace</span>
    <span class="wtab t2">Stocks Demo Workspace</span>
    <span class="wtab t3">Emini TF Test Workspace</span>
  </div>

  <div class="toolbar bottom">
    <span class="grip"></span>
    {#each bottomRow as it}{@render cell(it)}{/each}
    <span class="gap-bar"></span>
    <span class="grip g2 gfirst"></span>
    <div class="combo"><span>Type a symbol/interval</span><i class="caret"></i></div>
    <span class="cell globe">{@render ic('globe')}</span>
    <i class="caret c-glob"></i>
    <span class="gap-bar g3"></span>
    <span class="grip g2"></span>
    <div class="sel as">As is (5 Points)<i class="caret"></i></div>
    <span class="sep s1"></span>
    <div class="datebox">{@render ic('calBtn', 16)}<i class="caret blue"></i></div>
    <span class="cell c34">{@render ic('cal2')}</span>
    <span class="sep s2"></span>
    <span class="jump">{@render ic('jump')}<span>Jump</span></span>
    <span class="sep s3"></span>
    <span class="cell c-prev">{@render ic('prevBar')}</span>
    <i class="caret gray"></i>
    <span class="cell">{@render ic('play')}</span>
    <span class="cell c-next">{@render ic('nextBar')}</span>
    <i class="caret gray"></i>
    <span class="more">»</span>
  </div>

  <footer class="status">
    <span class="ready">Ready</span>
    <span class="st st1">0 q / 0 s</span>
    <span class="st st2">15:23:41</span>
    <span class="st st3"></span>
  </footer>
</div>

<style>
  :global(body) { margin: 0; background: #f0eded; overflow: hidden; }
  .app { width: 1280px; height: 1024px; display: flex; flex-direction: column; overflow: hidden; font-family: "Noto Sans", "Open Sans", sans-serif; color: #111; font-size: 11.5px; }
  .ic { display: block; }
  .title { height: 22px; flex: none; box-sizing: border-box; display: flex; align-items: center; padding-left: 1px; background: linear-gradient(90deg, #bfdcf8 0, #b5d7fb 45%, #b7d8fb 100%); border-bottom: 1px solid #44566b; position: relative; }
  .logo { flex: none; }
  .title-text { margin-left: 1px; font-size: 11.5px; color: #111; white-space: nowrap; }
  .winbtns { position: absolute; right: 3px; top: 0; display: flex; height: 18px; border: 1px solid #4a5a6e; border-top: 0; border-radius: 0 0 5px 5px; overflow: hidden; }
  .wb { width: 27px; display: flex; align-items: center; justify-content: center; background: linear-gradient(#d6e2ee, #aabfd4 50%, #7e97b0); border-right: 1px solid #5c6f82; }
  .wb.close { width: 46px; border: 0; background: linear-gradient(#e2a095, #c84a36 50%, #a93322); color: #fff; font-size: 13px; font-weight: bold; }
  .wmin { display: block; width: 10px; height: 4px; background: #fff; border: 1px solid #555; margin-top: 2px; }
  .wmax { display: block; width: 8px; height: 8px; background: transparent; border: 2px solid #fff; outline: 1px solid #555; outline-offset: -1px; }

  .menubar { height: 25px; box-sizing: border-box; flex: none; display: flex; align-items: center; background: linear-gradient(#fff 0, #eef1f8 30%, #d3d9eb 31%, #d3d9eb 100%); border-bottom: 1px solid #b4bccf; position: relative; padding-left: 2px; }
  .mico { width: 20px; margin: 0 5px 0 2px; }
  .menu { margin: 0 15.2px 0 0; font-size: 11.5px; }
  .mdi { position: absolute; right: 2px; top: 4px; display: flex; gap: 2px; }
  .mb { width: 31px; height: 15px; box-sizing: content-box; display: flex; align-items: center; justify-content: center; background: #dbe8f5; border: 1px solid #aab5c4; border-width: 1px 0 0 1px; box-shadow: inset -1px -1px 0 #aab5c4; }
  .mb.first { background: #e9eef6; }
  .d-min { width: 8px; height: 2px; background: #555; margin-top: 7px; }

  .toolbar { height: 29px; box-sizing: border-box; flex: none; display: flex; align-items: center; background: linear-gradient(#edf0fa, #d3daee); border-bottom: 1px solid #a9b0c4; }
  .toolbar > .grip:first-child { width: 10px; }
  .grip { flex: none; width: 19px; height: 100%; background: radial-gradient(circle, #9aa0aa 1px, transparent 1.2px); background-size: 3px 4px; background-repeat: repeat-y; background-position: 3px 0; }
  .grip.small { width: 6px; }
  .cell { flex: none; width: 23px; height: 24px; box-sizing: border-box; display: flex; align-items: center; justify-content: center; }
  .cell.narrow { width: 15px; }
  .cell.active { background: #bfc7d6; border: 1px solid #6a7383; border-radius: 3px; }
  .sep { flex: none; width: 8px; height: 20px; background: linear-gradient(#7a8292, #7a8292) center / 1px 100% no-repeat; }

  .trade { height: 75px; flex: none; display: flex; background: #efefef; padding: 1px 4px 0 2px; box-sizing: border-box; }
  .rail { width: 20px; height: 71px; background: #b7cde5; position: relative; flex: none; }
  .rail-x { position: absolute; top: 3px; left: 6px; font-size: 13px; font-weight: bold; color: #222; line-height: 14px; }
  .rail-t { position: absolute; left: 2px; bottom: 4px; writing-mode: vertical-rl; transform: rotate(180deg); white-space: nowrap; font-size: 10.5px; line-height: 14px; color: #6b7f94; }
  .trade-main { flex: 1; display: flex; flex-direction: column; margin-left: 2px; }
  .ttabs { height: 21px; display: flex; align-items: flex-end; flex: none; position: relative; z-index: 1; }
  .ttab { height: 17px; width: 70px; box-sizing: border-box; border: 1px solid #999; border-bottom: 0; background: #eee; display: flex; align-items: center; gap: 9px; padding-left: 6px; font-size: 10.5px; }
  .ttab.on { height: 22px; width: 130px; margin-bottom: -1px; background: #fff; padding: 0 0 2px 10px; gap: 9px; }
  .led { width: 9px; height: 9px; border-radius: 50%; display: block; flex: none; }
  .led.green { background: radial-gradient(#5fe04d, #0aa00a); box-shadow: 0 0 0 2px #bfe6bb; }
  .led.red { background: radial-gradient(#ff6a5f, #e00c0c); box-shadow: 0 0 0 2px #f4c0bc; }
  .tpanel { flex: none; height: 50px; box-sizing: border-box; border: 1px solid #a0a0a0; background: #fff; display: flex; align-items: center; padding: 0 0 0 14px; position: relative; }
  .field { height: 23px; box-sizing: border-box; border: 1px solid #dedede; display: flex; align-items: center; justify-content: space-between; padding: 0 2px 5px 1px; background: #fff; font-size: 10.5px; margin-top: 1px; }
  .w-sym { width: 116px; margin-right: 8px; }
  .w-sym svg { margin-top: 5px; }
  .w-qty { width: 89px; margin-right: 8px; }
  .calc { margin-left: auto; margin-right: 2px; margin-top: 5px; }
  .spin { display: flex; flex-direction: column; gap: 1px; width: 13px; height: 19px; margin-top: 5px; }
  .spin i { flex: 1; border: 1px solid #bbb; background: linear-gradient(#eef3fa, #d5e0ee); position: relative; }
  .spin i::after { content: ""; position: absolute; left: 3px; top: 2px; border: 3px solid transparent; }
  .spin .up::after { border-bottom-color: #5f83ad; top: -1px; }
  .spin .down::after { border-top-color: #5f83ad; top: 3px; }
  .sel { position: relative; height: 23px; box-sizing: border-box; border: 1px solid #8a8a8a; border-radius: 3px; background: linear-gradient(#fff 0, #f5f5f5 40%, #dcdcdc 100%); padding: 1px 0 0 2px; font-size: 10.5px; line-height: 17px; margin-top: 1px; flex: none; }
  .caret { position: absolute; right: 6px; top: 10px; width: 0; height: 0; border: 4px solid transparent; border-top-color: #111; border-bottom: 0; }
  .w-mkt { width: 72px; margin-right: 8px; }
  .price { width: 82px; height: 17px; box-sizing: border-box; background: #c5d3a3; border: 1px solid #8a9a78; border-radius: 3px; display: flex; align-items: center; margin-right: 7px; margin-top: 1px; font-size: 11px; }
  .price span { flex: 1; text-align: center; padding-left: 4px; }
  .price em { width: 8px; height: 100%; border-left: 1px solid #444; position: relative; background: #eee; }
  .price em i { position: absolute; left: 2px; top: 3px; border: 4px solid transparent; border-left-color: #111; border-right: 0; }
  .w-acc { width: 101px; margin-right: 7px; }
  .w-day { width: 56px; margin-right: 17px; }
  .ord { width: 64px; height: 35px; border: 1px solid #666; border-radius: 2px; margin: 2px 7px 0 0; padding: 0; font: inherit; font-size: 10.5px; line-height: 13px; display: flex; flex-direction: column; align-items: center; justify-content: center; color: #111; box-shadow: 0 0 0 2px #ececec; }
  .ord b { font-family: "Liberation Serif", serif; font-size: 12px; }
  .buy { background: linear-gradient(#b0c4e6, #8ea5cd); }
  .sell { background: linear-gradient(#f08585, #b94040); }

  .pane { display: block; flex: none; }
  .splitter { height: 4px; flex: none; background: linear-gradient(#fff 0 2px, #bbb 3px, #666); }
  text { font-family: "Liberation Sans", Arial, sans-serif; }
  .lg { font-size: 11px; }
  .pre { white-space: pre; }
  .ax { font-size: 11px; fill: #fff; }
  .tag { font-size: 11px; }
  .mk { font-size: 11px; text-anchor: middle; }

  .hscroll { height: 16px; flex: none; position: relative; background: #ececec; }
  .arr { position: absolute; top: 4px; border: 4px solid transparent; }
  .arr.l { left: 5px; border-right-color: #333; border-left: 0; }
  .arr.r { right: 4px; border-left-color: #333; border-right: 0; }
  .thumb { position: absolute; left: 1095px; width: 116px; height: 15px; box-sizing: border-box; border: 1px solid #999; border-radius: 2px; background: linear-gradient(#f5f5f5, #cfcfcf); display: flex; align-items: center; justify-content: center; }
  .thumb span { width: 7px; height: 7px; background: repeating-linear-gradient(90deg, #666 0 1px, transparent 1px 3px); }

  .wtabs { height: 18px; box-sizing: border-box; flex: none; display: flex; align-items: stretch; background: linear-gradient(90deg, #b9b9b9 40%, #dcdcdc); border-top: 1px solid #808080; font-size: 10.2px; position: relative; }
  .wnav { width: 66px; flex: none; background: #ececec; display: flex; align-items: center; padding-left: 5px; box-sizing: border-box; }
  .wtab { display: flex; align-items: center; white-space: nowrap; box-sizing: border-box; background: linear-gradient(#efefef, #d0d0d0); }
  .t1 { width: 139px; padding-left: 10px; clip-path: polygon(0 0, calc(100% - 6px) 0, 100% 100%, 6px 100%); }
  .t2 { width: 136px; padding-left: 10px; margin-left: -2px; clip-path: polygon(0 0, calc(100% - 6px) 0, 100% 100%, 6px 100%); }
  .t3 { width: 163px; padding-left: 11px; margin-left: -2px; background: #fff; font-weight: bold; font-size: 11.5px; clip-path: polygon(0 0, 100% 0, calc(100% - 6px) 100%, 6px 100%); }

  .bottom { height: 34px; background: linear-gradient(#f3f5fb 0, #edf0f8 25%, #d3daee 30%, #d3daee 100%); position: relative; border-bottom: 2px solid #a9b0c4; box-sizing: border-box; flex: none; }
  .gap-bar { width: 1px; height: 100%; background: #aab; margin-left: 10px; flex: none; }
  .g2 { width: 8px; }
  .gfirst { margin-right: 4px; }
  .combo { width: 147px; height: 22px; margin-left: 0; background: #fff; position: relative; box-sizing: border-box; padding-left: 5px; line-height: 21px; font-size: 11.3px; flex: none; }
  .globe { margin-left: 7px; }
  .c-glob { position: relative; right: auto; top: auto; margin-left: 5px; }
  .g3 { margin-left: 14px; }
  .as { width: 128px; margin: 0 0 0 2px; font-size: 11.5px; line-height: 19px; }
  .s1 { width: 9px; }
  .datebox { width: 128px; height: 20px; background: #fff; position: relative; box-sizing: border-box; display: flex; justify-content: flex-end; align-items: center; padding-right: 17px; flex: none; }
  .caret.blue { border-top-color: #47688f; right: 5px; top: 8px; }
  .c34 { margin-left: 1px; }
  .s2 { width: 10px; }
  .jump { display: flex; align-items: center; gap: 3px; width: 57px; flex: none; font-size: 11.5px; }
  .s3 { width: 8px; }
  .c-prev { margin-left: 5px; }
  .caret.gray { position: relative; top: auto; right: auto; border-top-color: #888; margin: 0 6px; }
  .c-next { margin-left: 6px; }
  .more { position: absolute; right: 2px; top: 1px; color: #5f74b0; font-size: 12px; line-height: 12px; }

  .status { flex: 1; background: #f0eded; display: flex; align-items: center; position: relative; font-size: 11px; }
  .ready { margin-left: 3px; flex: 1; }
  .st { height: 100%; display: flex; align-items: center; box-sizing: border-box; border-left: 1px solid #ddd; flex: none; }
  .st1 { width: 83px; justify-content: center; padding-left: 2px; }
  .st2 { width: 64px; padding-left: 4px; }
  .st3 { width: 31px; }
</style>
